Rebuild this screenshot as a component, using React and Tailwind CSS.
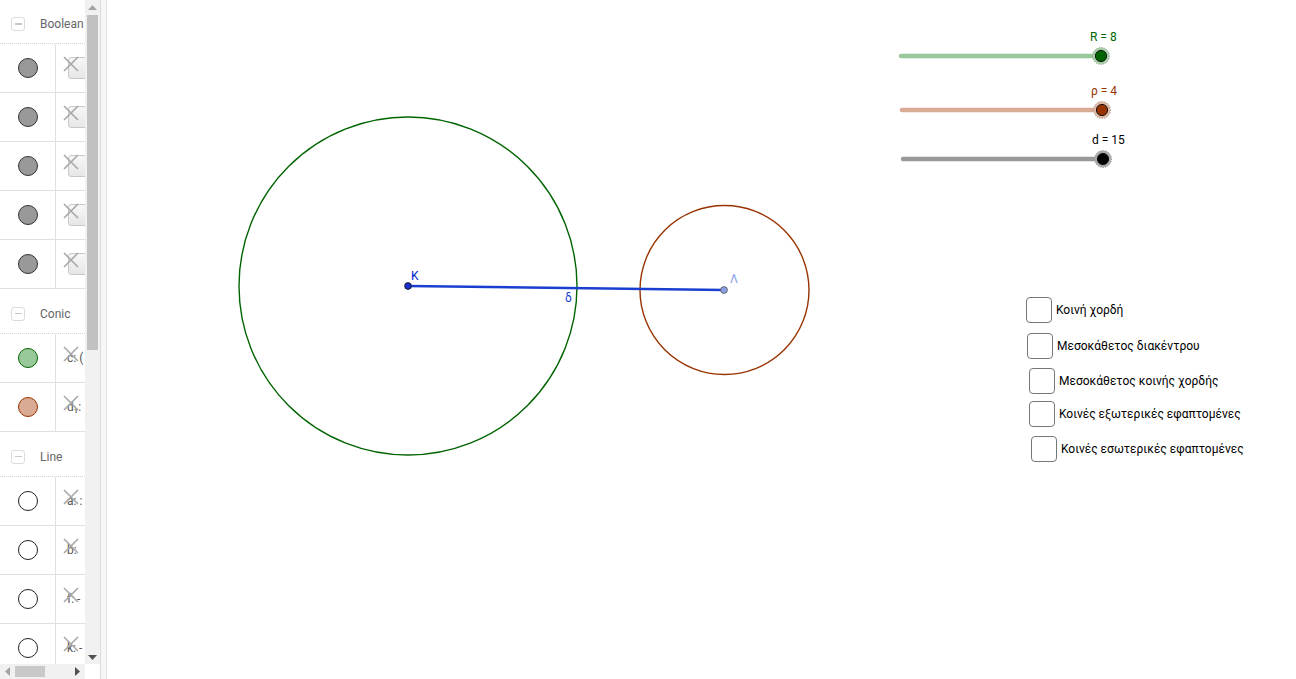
import React from "react";

const font = { fontFamily: "Roboto, 'Liberation Sans', sans-serif" };

function MinusBox() {
  return (
    <div className="w-[14px] h-[14px] rounded-[3px] border border-[#dcdcdc] bg-white flex items-center justify-center">
      <div className="w-[7px] h-[1.5px] bg-[#c8c8c8]" />
    </div>
  );
}

function Header({ label, h = 44 }) {
  return (
    <div className="flex items-center pt-[5px] border-b border-dotted border-[#d4d4d4]" style={{ height: h }}>
      <div className="w-[40px] pl-[11px] flex items-center">
        <MinusBox />
      </div>
      <span className="text-[12px] text-[#666]">{label}</span>
    </div>
  );
}

function XIcon() {
  return (
    <svg width="16" height="16" viewBox="0 0 16 16" className="absolute left-[7px] top-[12px]">
      <path d="M1 1 L15 15 M15 1 L1 15" stroke="#a8a8a8" strokeWidth="1.6" />
    </svg>
  );
}

function Row({ fill, stroke, box = false, text = "" }) {
  return (
    <div className="flex h-[49px] border-b border-[#e0e0e0]">
      <div className="w-[56px] border-r border-[#e0e0e0] flex items-center justify-center">
        <div className="w-[20px] h-[20px] rounded-full border" style={{ background: fill, borderColor: stroke }} />
      </div>
      <div className="relative flex-1 overflow-hidden">
        {box && (
          <div className="absolute left-[12px] top-[13px] w-[24px] h-[22px] rounded-[3px] border border-[#c8c8c8] bg-gradient-to-b from-[#f7f7f7] to-[#e6e6e6]" />
        )}
        {text && (
          <span className="absolute left-[11px] top-[15px] text-[12px] text-[#555]">{text}</span>
        )}
        <XIcon />
      </div>
    </div>
  );
}

function Sidebar() {
  return (
    <div className="flex w-[107px] h-[679px] shrink-0">
      <div className="flex flex-col w-[100px]">
        <div className="flex flex-1 overflow-hidden">
          <div className="w-[85px] overflow-hidden bg-white">
            <Header label="Boolean" h={44} />
            <Row fill="#999" stroke="#333" box />
            <Row fill="#999" stroke="#333" box />
            <Row fill="#999" stroke="#333" box />
            <Row fill="#999" stroke="#333" box />
            <Row fill="#999" stroke="#333" box />
            <Header label="Conic" h={45} />
            <Row fill="#99c89a" stroke="#006400" text="c: (" />
            <Row fill="#d9aa94" stroke="#993300" text="d₁:" />
            <Header label="Line" h={45} />
            <Row fill="#fff" stroke="#222" text="a: :" />
            <Row fill="#fff" stroke="#222" text="b:" />
            <Row fill="#fff" stroke="#222" text="f: -" />
            <Row fill="#fff" stroke="#222" text="k: -" />
          </div>
          <div className="w-[15px] bg-[#f1f1f1] flex flex-col items-center">
            <div className="h-[14px] flex items-center justify-center">
              <svg width="9" height="5" viewBox="0 0 9 5"><path d="M0 5 L4.5 0 L9 5 Z" fill="#a3a3a3" /></svg>
            </div>
            <div className="w-[11px] h-[335px] mt-[1px] bg-[#c1c1c1]" />
            <div className="flex-1" />
            <div className="h-[14px] flex items-center justify-center">
              <svg width="9" height="5" viewBox="0 0 9 5"><path d="M0 0 L4.5 5 L9 0 Z" fill="#505050" /></svg>
            </div>
          </div>
        </div>
        <div className="flex h-[15px] shrink-0">
          <div className="w-[85px] bg-[#f1f1f1] flex items-center">
            <div className="w-[15px] flex items-center justify-center">
              <svg width="5" height="9" viewBox="0 0 5 9"><path d="M5 0 L0 4.5 L5 9 Z" fill="#a3a3a3" /></svg>
            </div>
            <div className="w-[30px] h-[11px] bg-[#c9c9c9]" />
            <div className="flex-1" />
            <div className="w-[15px] flex items-center justify-center">
              <svg width="5" height="9" viewBox="0 0 5 9"><path d="M0 0 L5 4.5 L0 9 Z" fill="#505050" /></svg>
            </div>
          </div>
          <div className="w-[15px] bg-white" />
        </div>
      </div>
      <div className="w-[7px] bg-[#f6f6f6] border-l border-[#dcdcdc] border-r border-r-[#e4e4e4]" />
    </div>
  );
}

function Slider({ x1, x2, y, color, thumb, halo, label, labelColor, lx }) {
  return (
    <g>
      <line x1={x1} y1={y} x2={x2} y2={y} stroke={color} strokeWidth="4.5" strokeLinecap="round" />
      <circle cx={x2} cy={y} r="8.5" fill={halo} />
      <circle cx={x2} cy={y} r="8.5" fill="none" stroke="#888" strokeWidth="0.8" strokeDasharray="1 1.5" />
      <circle cx={x2} cy={y} r="5.6" fill={thumb} stroke="#111" strokeWidth="1" />
      <text x={lx} y={y - 15} fontSize="12" fill={labelColor} style={font}>{label}</text>
    </g>
  );
}

function Checkbox({ x, y, label }) {
  return (
    <div className="absolute flex items-center gap-[4px]" style={{ left: x - 107, top: y }}>
      <div className="w-[26px] h-[26px] rounded-[4px] border border-[#777] bg-white" />
      <span className="text-[12px] text-black">{label}</span>
    </div>
  );
}

export default function App() {
  return (
    <div className="flex w-[1296px] h-[679px] bg-white overflow-hidden" style={font}>
      <Sidebar />
      <div className="relative flex-1 h-full bg-white">
        <svg className="absolute inset-0" width="1189" height="679">
          <g transform="translate(-107,0)">
            <circle cx="408" cy="286" r="169" fill="none" stroke="#006400" strokeWidth="1.4" />
            <circle cx="724.5" cy="290" r="84.5" fill="none" stroke="#993300" strokeWidth="1.4" />
            <line x1="408" y1="286" x2="724" y2="290" stroke="#1a3fd0" strokeWidth="2.6" />
            <circle cx="408" cy="286" r="3.4" fill="#1a2fcc" stroke="#111" strokeWidth="0.8" />
            <circle cx="724" cy="290" r="3.4" fill="#8a9fe6" stroke="#555" strokeWidth="0.8" />
            <text x="411" y="280" fontSize="12" fill="#0022cc" style={font}>Κ</text>
            <text x="565" y="302" fontSize="12" fill="#1a3fd0" style={font}>δ</text>
            <text x="730" y="283" fontSize="12" fill="#8a9fe6" style={font}>Λ</text>
            <Slider x1={901} x2={1101} y={56} color="#99c89a" thumb="#006400" halo="#a8d0a8" label="R = 8" labelColor="#006400" lx={1090} />
            <Slider x1={902} x2={1102} y={110} color="#d9aa94" thumb="#993300" halo="#e0b8a6" label="ρ = 4" labelColor="#993300" lx={1091} />
            <Slider x1={903} x2={1103} y={159} color="#999" thumb="#000" halo="#aaa" label="d = 15" labelColor="#000" lx={1092} />
          </g>
        </svg>
        <Checkbox x={1026} y={297} label="Κοινή χορδή" />
        <Checkbox x={1027} y={333} label="Μεσοκάθετος διακέντρου" />
        <Checkbox x={1029} y={368} label="Μεσοκάθετος κοινής χορδής" />
        <Checkbox x={1029} y={401} label="Κοινές εξωτερικές εφαπτομένες" />
        <Checkbox x={1031} y={436} label="Κοινές εσωτερικές εφαπτομένες" />
      </div>
    </div>
  );
}
